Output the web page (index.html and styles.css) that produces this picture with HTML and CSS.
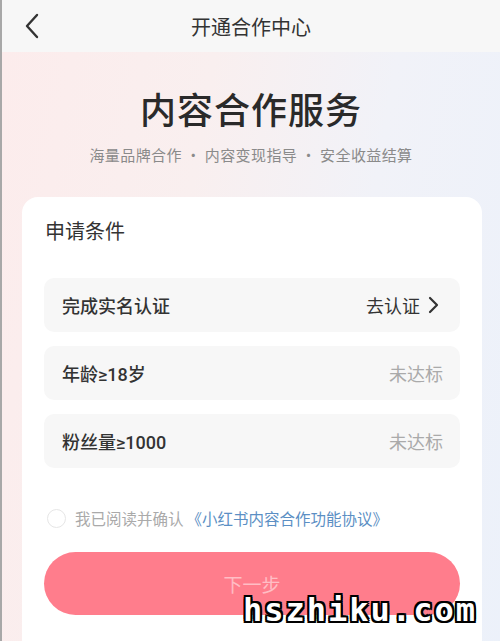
FILE: index.html
```html
<!DOCTYPE html>
<html lang="zh-CN">
<head>
    <meta charset="UTF-8">
    <meta name="viewport" content="width=device-width, initial-scale=1.0">
    <title>开通合作中心</title>
    <link rel="stylesheet" href="styles.css">
</head>
<body>
    <div class="page">
        <div class="header">
            <span class="back">
                <svg width="16" height="26" viewBox="0 0 16 26"><path d="M13 2 L3 13 L13 24" fill="none" stroke="#333" stroke-width="2.4" stroke-linecap="round" stroke-linejoin="round"/></svg>
            </span>
            <h1 class="header-title">开通合作中心</h1>
            <span></span>
        </div>

        <div class="hero">
            <h2 class="hero-title">内容合作服务</h2>
            <p class="hero-sub">海量品牌合作 · 内容变现指导 · 安全收益结算</p>

            <div class="card">
                <h3 class="card-title">申请条件</h3>

                <div class="rows">
                    <div class="row">
                        <span class="row-label">完成实名认证</span>
                        <span class="row-action">去认证
                            <svg width="11" height="18" viewBox="0 0 11 18"><path d="M2 2 L9 9 L2 16" fill="none" stroke="#333" stroke-width="2.2" stroke-linecap="round" stroke-linejoin="round"/></svg>
                        </span>
                    </div>
                    <div class="row">
                        <span class="row-label">年龄≥18岁</span>
                        <span class="row-status">未达标</span>
                    </div>
                    <div class="row">
                        <span class="row-label">粉丝量≥1000</span>
                        <span class="row-status">未达标</span>
                    </div>
                </div>

                <div class="agree">
                    <span class="check"></span>
                    <span>我已阅读并确认</span>
                    <a class="agree-link">《小红书内容合作功能协议》</a>
                </div>

                <button class="next">下一步</button>
            </div>
        </div>

        <div class="watermark">hszhiku.com</div>
    </div>
</body>
</html>
```

FILE: styles.css
```css
body {
    margin: 0;
    font-family: "Noto Sans CJK SC", "Noto Sans", sans-serif;
    background-color: #f3f3f5;
    overflow: hidden;
}
.page {
    position: relative;
    width: 498px;
    height: 641px;
    border-left: 2px solid #a8a8a8;
    overflow: hidden;
}
.header {
    display: grid;
    grid-template-columns: 60px 1fr 60px;
    align-items: center;
    height: 52px;
    background-color: #f7f7f7;
}
.back {
    display: flex;
    padding-left: 22px;
}
.header-title {
    margin: 0;
    text-align: center;
    font-size: 20px;
    font-weight: 400;
    color: #333;
}
.hero {
    padding-top: 35px;
    background: linear-gradient(100deg, #fcecec 0%, #f9efef 35%, #f1f2f8 65%, #ecf1fa 100%);
    min-height: 600px;
}
.hero-title {
    margin: 0;
    text-align: center;
    font-size: 36px;
    line-height: 43px;
    font-weight: 500;
    letter-spacing: 1px;
    color: #2a2a2a;
}
.hero-sub {
    margin: 15px 0 0;
    text-align: center;
    font-size: 15px;
    line-height: 20px;
    letter-spacing: 0.4px;
    color: #8a8a8a;
}
.card {
    margin: 32px 18px 0 20px;
    padding: 21px 22px 40px;
    background-color: #fff;
    border-radius: 16px;
}
.card-title {
    margin: 0 0 0 1px;
    font-size: 20px;
    line-height: 26px;
    font-weight: 400;
    color: #333;
}
.rows {
    display: flex;
    flex-direction: column;
    gap: 14px;
    margin-top: 34px;
}
.row {
    display: flex;
    align-items: center;
    justify-content: space-between;
    height: 54px;
    padding: 0 17px 0 18px;
    background-color: #f7f7f7;
    border-radius: 10px;
}
.row-label {
    font-family: Roboto, "Noto Sans CJK SC", sans-serif;
    font-size: 18px;
    font-weight: 500;
    color: #333;
}
.row-action {
    display: flex;
    align-items: center;
    gap: 8px;
    font-size: 18px;
    color: #333;
}
.row-action svg {
    margin-right: 4px;
}
.row-status {
    font-size: 18px;
    color: #aaa;
}
.agree {
    display: flex;
    align-items: center;
    height: 20px;
    margin-top: 40px;
    font-size: 15.5px;
    color: #aaa;
}
.check {
    width: 17px;
    height: 17px;
    margin: 0 9px 0 3px;
    border: 1px solid #e6e6e6;
    border-radius: 50%;
}
.agree-link {
    margin-left: 3px;
    color: #5b8fc4;
}
.next {
    display: block;
    width: 100%;
    height: 63px;
    margin-top: 24px;
    border: none;
    border-radius: 32px;
    background-color: #ff7d8c;
    color: rgba(255, 255, 255, 0.5);
    font-family: inherit;
    font-size: 19px;
    line-height: 19px;
}
.watermark {
    position: absolute;
    left: 241px;
    top: 598px;
    font-family: "DejaVu Sans Mono", monospace;
    font-weight: bold;
    font-size: 32px;
    line-height: 24px;
    letter-spacing: 2px;
    color: #fff;
    text-shadow: -2px -2px 0 #000, 2px -2px 0 #000, -2px 2px 0 #000, 2px 2px 0 #000, 0 2px 0 #000, 0 -2px 0 #000, 2px 0 0 #000, -2px 0 0 #000;
}
```
